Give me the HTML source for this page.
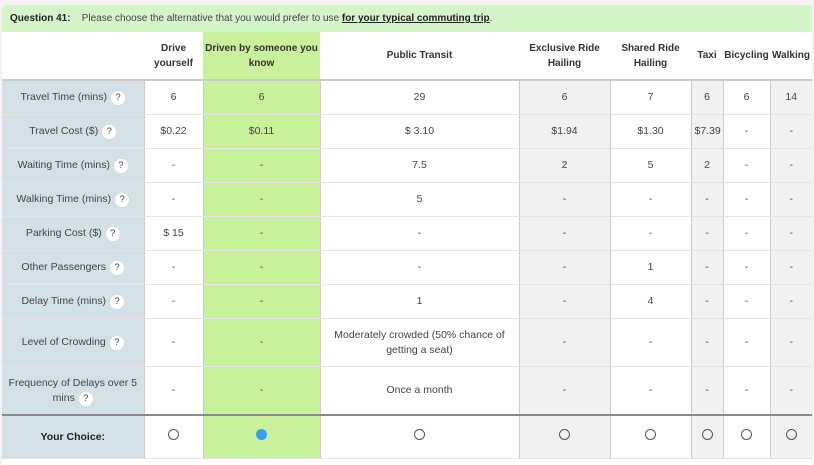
<!DOCTYPE html>
<html><head><style>
body{margin:0;background:#f3f3f3;font-family:"Liberation Sans",sans-serif;width:814px;height:457px;overflow:hidden;position:relative}
.wrap{position:absolute;left:2px;top:5px;width:810px;height:460px;background:#fff}
.q{height:27px;background:#d4f5c8;font-size:10px;color:#444;line-height:27px;padding-left:8px;border-radius:3px 3px 0 0}
.q b{color:#222}
.q u{font-weight:bold;color:#222}
table{border-collapse:collapse;table-layout:fixed;width:810px;font-size:10.5px;color:#444}
td{text-align:center;border-left:1px solid #ccc;border-bottom:1px solid #e4e4e4;padding:0 3px;line-height:15px}
tr.h td{height:47px;border-bottom:2px solid #ccc;font-weight:bold;color:#333;background:#fff;border-left:none;font-size:10px;padding:0 1px}
tr.h td.g{background:#c9f09b}
td.l{background:#d3e0e6;border-left:none}
td.g{background:#c9f09b}
td.y{background:#f1f1f1}
tr.r td{height:33px}
tr.t td{height:47px}
tr.c td{height:42px;border-top:2px solid #8a8a8a}
.qm{display:inline-block;width:14px;height:14px;border-radius:50%;background:#fff;font-size:9.5px;line-height:14px;margin-left:4px;color:#444}
.o{display:inline-block;width:9px;height:9px;border:1.6px solid #555;border-radius:50%}
.f{display:inline-block;width:11px;height:11px;border-radius:50%;background:#3a9cf7}
</style></head><body>
<div class="wrap">
<div class="q"><b>Question 41:</b>&nbsp;&nbsp;&nbsp; Please choose the alternative that you would prefer to use <u>for your typical commuting trip</u>.</div>
<table>
<colgroup><col style="width:142px"><col style="width:59px"><col style="width:117px"><col style="width:199px"><col style="width:91px"><col style="width:81px"><col style="width:32px"><col style="width:47px"><col style="width:42px"></colgroup>
<tr class="h"><td></td><td>Drive yourself</td><td class="g">Driven by someone you know</td><td>Public Transit</td><td>Exclusive Ride Hailing</td><td>Shared Ride Hailing</td><td>Taxi</td><td>Bicycling</td><td>Walking</td></tr>
<tr class="r"><td class="l">Travel Time (mins)<span class="qm">?</span></td><td>6</td><td class="g">6</td><td>29</td><td class="y">6</td><td>7</td><td class="y">6</td><td>6</td><td class="y">14</td></tr>
<tr class="r"><td class="l">Travel Cost ($)<span class="qm">?</span></td><td>$0.22</td><td class="g">$0.11</td><td>$ 3.10</td><td class="y">$1.94</td><td>$1.30</td><td class="y">$7.39</td><td>-</td><td class="y">-</td></tr>
<tr class="r"><td class="l">Waiting Time (mins)<span class="qm">?</span></td><td>-</td><td class="g">-</td><td>7.5</td><td class="y">2</td><td>5</td><td class="y">2</td><td>-</td><td class="y">-</td></tr>
<tr class="r"><td class="l">Walking Time (mins)<span class="qm">?</span></td><td>-</td><td class="g">-</td><td>5</td><td class="y">-</td><td>-</td><td class="y">-</td><td>-</td><td class="y">-</td></tr>
<tr class="r"><td class="l">Parking Cost ($)<span class="qm">?</span></td><td>$ 15</td><td class="g">-</td><td>-</td><td class="y">-</td><td>-</td><td class="y">-</td><td>-</td><td class="y">-</td></tr>
<tr class="r"><td class="l">Other Passengers<span class="qm">?</span></td><td>-</td><td class="g">-</td><td>-</td><td class="y">-</td><td>1</td><td class="y">-</td><td>-</td><td class="y">-</td></tr>
<tr class="r"><td class="l">Delay Time (mins)<span class="qm">?</span></td><td>-</td><td class="g">-</td><td>1</td><td class="y">-</td><td>4</td><td class="y">-</td><td>-</td><td class="y">-</td></tr>
<tr class="t"><td class="l">Level of Crowding<span class="qm">?</span></td><td>-</td><td class="g">-</td><td>Moderately crowded (50% chance of getting a seat)</td><td class="y">-</td><td>-</td><td class="y">-</td><td>-</td><td class="y">-</td></tr>
<tr class="t"><td class="l">Frequency of Delays over 5 mins<span class="qm">?</span></td><td>-</td><td class="g">-</td><td>Once a month</td><td class="y">-</td><td>-</td><td class="y">-</td><td>-</td><td class="y">-</td></tr>
<tr class="c"><td class="l"><b style="color:#222">Your Choice:</b></td><td><span class="o"></span></td><td class="g"><span class="f"></span></td><td><span class="o"></span></td><td class="y"><span class="o"></span></td><td><span class="o"></span></td><td class="y"><span class="o"></span></td><td><span class="o"></span></td><td class="y"><span class="o"></span></td></tr>
</table>
</div>
</body></html>
